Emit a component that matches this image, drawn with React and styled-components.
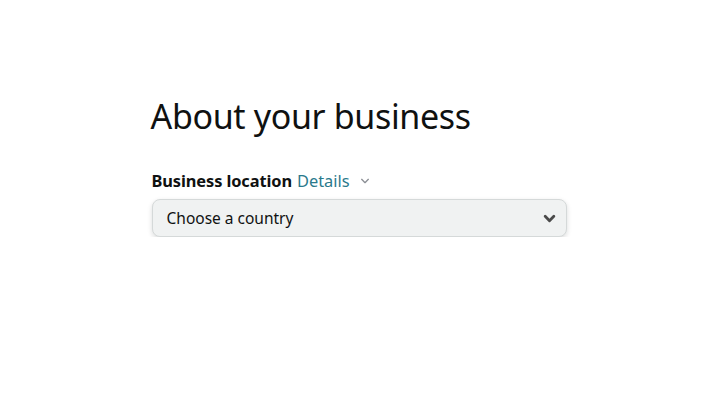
import React from "react";
import styled, { createGlobalStyle } from "styled-components";

const Global = createGlobalStyle`
  html, body { margin: 0; padding: 0; background: #fff; }
  body { font-family: "Noto Sans", Arial, sans-serif; color: #0f1111; }
`;

const Page = styled.main`
  display: flex;
  justify-content: center;
  padding-top: 92px;
`;

const Form = styled.section`
  width: 415px;
  display: flex;
  flex-direction: column;
`;

const Title = styled.h1`
  margin: 0 0 30px -1px;
  font-size: 34px;
  font-weight: 400;
  line-height: 48px;
  color: #0f1111;
  letter-spacing: -0.35px;
`;

const Label = styled.div`
  display: flex;
  align-items: center;
  gap: 5px;
  font-size: 16.4px;
  line-height: 22px;
  margin-bottom: 7px;
`;

const Strong = styled.span`
  font-weight: 700;
  letter-spacing: -0.1px;
`;

const Link = styled.span`
  color: #2a7a8c;
  display: inline-flex;
  align-items: center;
  gap: 10px;
`;

const SelectBox = styled.div`
  height: 38px;
  box-sizing: border-box;
  border: 1px solid #d5d9d9;
  border-radius: 8px;
  background: #f0f2f2;
  box-shadow: 0 2px 5px rgba(15, 17, 17, 0.15);
  display: flex;
  align-items: center;
  justify-content: space-between;
  padding: 0 10px 0 14px;
  font-size: 15.5px;
  color: #0f1111;
`;

const Chevron = ({ size = 12, color = "#555", stroke = 2.6 }) => (
  <svg width={size} height={size} viewBox="0 0 12 12" fill="none">
    <path d="M2 4l4 4 4-4" stroke={color} strokeWidth={stroke} strokeLinecap="round" strokeLinejoin="round" />
  </svg>
);

export default function App() {
  return (
    <>
      <Global />
      <Page>
        <Form>
          <Title>About your business</Title>
          <Label>
            <Strong>Business location</Strong>
            <Link>
              Details
              <Chevron size={10} color="#8d9096" stroke={1.6} />
            </Link>
          </Label>
          <SelectBox>
            <span>Choose a country</span>
            <Chevron size={13} color="#4a4a4a" stroke={2.6} />
          </SelectBox>
        </Form>
      </Page>
    </>
  );
}
